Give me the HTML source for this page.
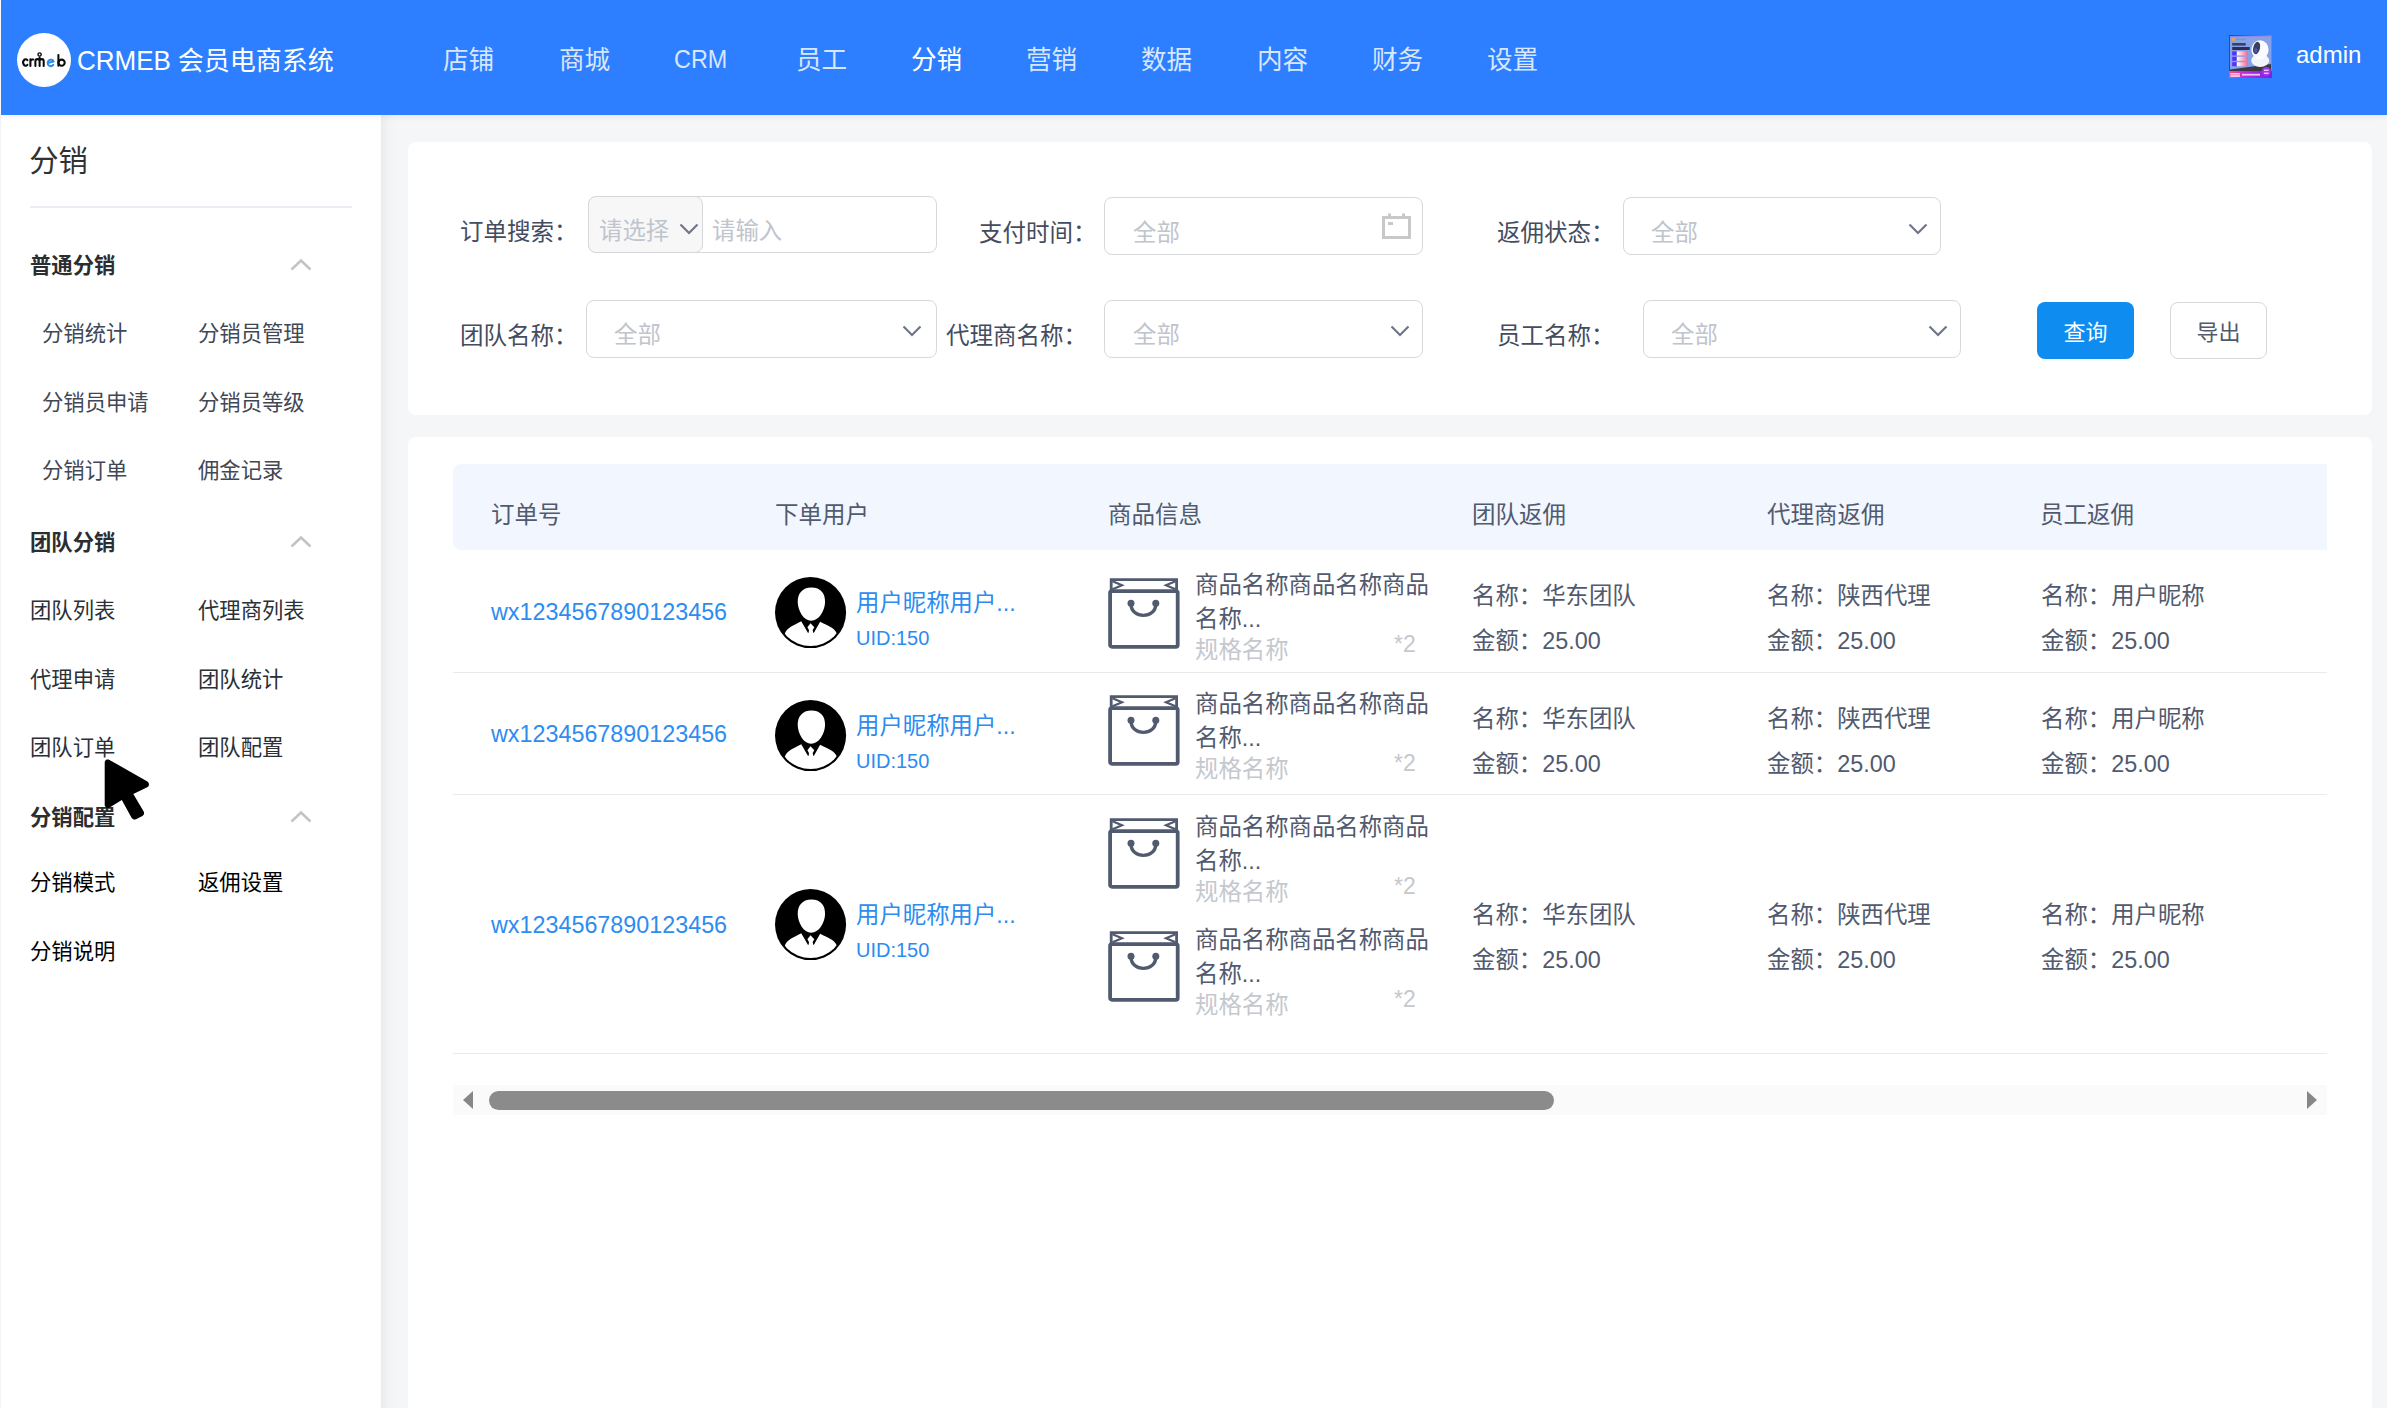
<!DOCTYPE html><html lang="zh-CN"><head><meta charset="utf-8"><title>CRMEB</title><style>
*{box-sizing:border-box;margin:0;padding:0}
html,body{width:2387px;height:1408px;overflow:hidden;background:#f5f6f8;font-family:"Liberation Sans","Noto Sans CJK SC",sans-serif}
.t{position:absolute;white-space:nowrap}
.b{position:absolute}
svg{position:absolute;overflow:visible}
</style></head><body>
<div class="b" style="left:0px;top:0px;width:381px;height:1408px;background:#fff"></div>
<div class="b" style="left:381px;top:0px;width:17px;height:1408px;background:linear-gradient(90deg,rgba(0,0,0,0.042),rgba(0,0,0,0.012) 45%,rgba(0,0,0,0))"></div>
<div class="b" style="left:0px;top:115px;width:1px;height:1293px;background:#f4f4f6"></div>
<div class="b" style="left:1px;top:0px;width:2386px;height:115px;background:#2d7fff;box-shadow:0 2px 6px rgba(0,0,0,0.06)"></div>
<div class="b" style="left:17px;top:33px;width:54px;height:54px;background:#fff;border-radius:50%"></div>
<svg style="left:17px;top:33px" width="54" height="54" viewBox="17 33 54 54" fill="none" stroke="#0a0a0a" stroke-width="2.05" stroke-linecap="round" stroke-linejoin="round"><path d="M27.4 60.2 A2.5 3.2 0 1 0 27.4 64.8"/><path d="M30.4 59.3 L30.4 66 M30.4 61.6 Q30.7 59.2 33.2 59.5"/><path d="M35.4 66 L35.4 61.3 Q35.4 59.1 37.5 59.1 Q39.6 59.1 39.6 61.3 L39.6 66 M39.6 61.3 Q39.6 59.1 41.7 59.1 Q43.7 59.1 43.7 61.3 L43.7 66 M39.6 60 L39.6 57.4"/><circle cx="39.6" cy="54.5" r="1.6" stroke-width="1.4"/><path d="M47.8 62.9 L53.6 61.6 A3.1 3.2 0 1 0 53.2 64.9" stroke="#2d8cf0"/><path d="M58.4 54.9 L58.4 65.8"/><circle cx="61.6" cy="62.7" r="3.1"/></svg>
<div class="t" style="left:77px;top:41.0px;font-size:26px;line-height:38px;color:#fff;transform:scaleY(1.08);transform-origin:50% 56%;">CRMEB</div>
<div class="t" style="left:177.8px;top:42.2px;font-size:26px;line-height:38px;color:#fff;">会员电商系统</div>
<div class="t" style="left:443px;top:40.5px;font-size:25.6px;line-height:38px;color:rgba(255,255,255,0.82);">店铺</div>
<div class="t" style="left:559px;top:40.5px;font-size:25.6px;line-height:38px;color:rgba(255,255,255,0.82);">商城</div>
<div class="t" style="left:674px;top:40.5px;font-size:23.4px;line-height:38px;color:rgba(255,255,255,0.82);transform:scaleY(1.07);transform-origin:50% 56%;">CRM</div>
<div class="t" style="left:796px;top:40.5px;font-size:25.6px;line-height:38px;color:rgba(255,255,255,0.82);">员工</div>
<div class="t" style="left:911px;top:40.5px;font-size:25.6px;line-height:38px;color:#fff;">分销</div>
<div class="t" style="left:1026px;top:40.5px;font-size:25.6px;line-height:38px;color:rgba(255,255,255,0.82);">营销</div>
<div class="t" style="left:1141px;top:40.5px;font-size:25.6px;line-height:38px;color:rgba(255,255,255,0.82);">数据</div>
<div class="t" style="left:1257px;top:40.5px;font-size:25.6px;line-height:38px;color:rgba(255,255,255,0.82);">内容</div>
<div class="t" style="left:1372px;top:40.5px;font-size:25.6px;line-height:38px;color:rgba(255,255,255,0.82);">财务</div>
<div class="t" style="left:1487px;top:40.5px;font-size:25.6px;line-height:38px;color:rgba(255,255,255,0.82);">设置</div>
<svg style="left:2229px;top:35px" width="43" height="43" viewBox="0 0 43 43"><defs><linearGradient id="ag1" x1="0" y1="0" x2="1" y2="0"><stop offset="0" stop-color="#4a22ff"/><stop offset="0.5" stop-color="#b42cf0"/><stop offset="1" stop-color="#ff4f86"/></linearGradient><linearGradient id="ag2" x1="0" y1="0" x2="1" y2="0"><stop offset="0" stop-color="#ff4f86"/><stop offset="0.35" stop-color="#c22ad8"/><stop offset="1" stop-color="#7a1fe0"/></linearGradient><linearGradient id="ag3" x1="0" y1="0" x2="1" y2="0"><stop offset="0" stop-color="#fff"/><stop offset="1" stop-color="#ff5f8f"/></linearGradient></defs><rect width="43" height="43" fill="url(#ag1)"/><rect x="1" y="1.2" width="41" height="35" fill="#86a2e6"/><rect x="3.2" y="3" width="2.6" height="3" fill="#e8a84a"/><rect x="7" y="3.8" width="10.5" height="1.2" fill="#7f93cf"/><rect x="3.2" y="8" width="13.5" height="2.6" fill="#3b3f66"/><rect x="3.2" y="12" width="17.5" height="3" fill="#2b2f52"/><rect x="3.2" y="16.4" width="4.3" height="4" fill="#5a2cff"/><rect x="8" y="16.4" width="11" height="4" fill="url(#ag3)"/><rect x="3.2" y="21.8" width="4.3" height="4" fill="#5a2cff"/><rect x="8" y="21.8" width="11" height="4" fill="url(#ag3)"/><rect x="3.2" y="27.2" width="4.3" height="4" fill="#5a2cff"/><rect x="8" y="27.2" width="11" height="4" fill="url(#ag3)"/><path d="M1 34.5 L42 29 L42 37 L1 37 Z" fill="#3a3a46"/><ellipse cx="31.2" cy="25.5" rx="9" ry="6.5" fill="#f3f5fb"/><ellipse cx="31" cy="14.8" rx="8.6" ry="9.6" fill="#fbfcff"/><ellipse cx="27.6" cy="13" rx="3.4" ry="6.3" transform="rotate(14 27.6 13)" fill="#3a3f5c"/><ellipse cx="26.8" cy="15.5" rx="1.6" ry="2.6" fill="#4a55b8"/><rect x="0" y="36" width="43" height="7" fill="url(#ag2)"/><circle cx="37.3" cy="36.6" r="4.6" fill="#a233e6"/><rect x="1.5" y="38" width="9.5" height="1.6" fill="#ffc6dc"/><rect x="1.5" y="40.2" width="9.5" height="1.6" fill="#ffd9e8"/><rect x="13" y="38.8" width="18" height="1.8" fill="#ecc4f6"/><rect x="35" y="34.6" width="4.6" height="1.4" fill="#f0c8fa"/><rect x="35" y="37.6" width="4.6" height="1.4" fill="#f0c8fa"/></svg>
<div class="t" style="left:2296px;top:38.0px;font-size:24px;line-height:34px;color:#fff;">admin</div>
<div class="t" style="left:29.2px;top:141.2px;font-size:29.33px;line-height:40px;color:#303133;">分销</div>
<div class="b" style="left:30px;top:206px;width:322px;height:2px;background:#ebedf5"></div>
<div class="t" style="left:30px;top:251.0px;font-size:21.33px;line-height:30px;color:#2c2d30;font-weight:bold">普通分销</div>
<svg style="left:290px;top:258px" width="22" height="14" viewBox="0 0 22 14"><path d="M1.5 11.5 L11 2.5 L20.5 11.5" fill="none" stroke="#c2c3c5" stroke-width="2.5"/></svg>
<div class="t" style="left:30px;top:528.0px;font-size:21.33px;line-height:30px;color:#2c2d30;font-weight:bold">团队分销</div>
<svg style="left:290px;top:535px" width="22" height="14" viewBox="0 0 22 14"><path d="M1.5 11.5 L11 2.5 L20.5 11.5" fill="none" stroke="#c2c3c5" stroke-width="2.5"/></svg>
<div class="t" style="left:30px;top:803.0px;font-size:21.33px;line-height:30px;color:#2c2d30;font-weight:bold">分销配置</div>
<svg style="left:290px;top:810px" width="22" height="14" viewBox="0 0 22 14"><path d="M1.5 11.5 L11 2.5 L20.5 11.5" fill="none" stroke="#c2c3c5" stroke-width="2.5"/></svg>
<div class="t" style="left:42px;top:319.0px;font-size:21.33px;line-height:30px;color:#414754;">分销统计</div>
<div class="t" style="left:198px;top:319.0px;font-size:21.33px;line-height:30px;color:#414754;">分销员管理</div>
<div class="t" style="left:42px;top:388.0px;font-size:21.33px;line-height:30px;color:#414754;">分销员申请</div>
<div class="t" style="left:198px;top:388.0px;font-size:21.33px;line-height:30px;color:#414754;">分销员等级</div>
<div class="t" style="left:42px;top:456.0px;font-size:21.33px;line-height:30px;color:#414754;">分销订单</div>
<div class="t" style="left:198px;top:456.0px;font-size:21.33px;line-height:30px;color:#414754;">佣金记录</div>
<div class="t" style="left:30px;top:596.0px;font-size:21.33px;line-height:30px;color:#2b2f36;">团队列表</div>
<div class="t" style="left:198px;top:596.0px;font-size:21.33px;line-height:30px;color:#2b2f36;">代理商列表</div>
<div class="t" style="left:30px;top:665.0px;font-size:21.33px;line-height:30px;color:#2b2f36;">代理申请</div>
<div class="t" style="left:198px;top:665.0px;font-size:21.33px;line-height:30px;color:#2b2f36;">团队统计</div>
<div class="t" style="left:30px;top:733.0px;font-size:21.33px;line-height:30px;color:#2b2f36;">团队订单</div>
<div class="t" style="left:198px;top:733.0px;font-size:21.33px;line-height:30px;color:#2b2f36;">团队配置</div>
<div class="t" style="left:30px;top:868.0px;font-size:21.33px;line-height:30px;color:#000;">分销模式</div>
<div class="t" style="left:198px;top:868.0px;font-size:21.33px;line-height:30px;color:#000;">返佣设置</div>
<div class="t" style="left:30px;top:937.0px;font-size:21.33px;line-height:30px;color:#000;">分销说明</div>
<svg style="left:100px;top:754px" width="56" height="72" viewBox="0 0 56 72"><path d="M9.5 5.9 L8.6 5.5 L7.7 5.4 L6.7 5.6 L5.9 6.1 L5.3 6.8 L4.8 7.7 L4.7 8.6 L4.7 50.8 L4.8 51.7 L5.3 52.6 L5.9 53.3 L6.8 53.8 L7.7 53.9 L8.7 53.9 L9.6 53.5 L21.8 45.9 L31.7 63.9 L32.3 64.6 L33.1 65.2 L34.1 65.5 L35.0 65.5 L36.0 65.2 L42.4 61.9 L43.2 61.2 L43.8 60.4 L44.1 59.4 L44.0 58.3 L43.7 57.4 L33.3 40.0 L47.2 33.2 L48.0 32.7 L48.6 31.9 L48.9 31.0 L48.9 30.0 L48.7 29.0 L48.1 28.2 L47.4 27.6 L9.5 5.9Z" fill="#000"/></svg>
<div class="b" style="left:408px;top:142px;width:1964px;height:273px;background:#fff;border-radius:8px"></div>
<div class="t" style="left:460px;top:214.5px;font-size:23.5px;line-height:34px;color:#444c5e;">订单搜索：</div>
<div class="b" style="left:588px;top:196px;width:349px;height:57px;border:1px solid #d7d8dc;border-radius:8px;background:#fff;"></div>
<div class="b" style="left:588px;top:196px;width:115px;height:57px;border:1px solid #d7d8dc;border-radius:8px;background:#f7f7f8"></div>
<div class="t" style="left:599px;top:213.5px;font-size:23.4px;line-height:34px;color:#c0c4cc;">请选择</div>
<svg style="left:679px;top:222.5px" width="20" height="12" viewBox="0 0 20 12"><path d="M1.5 1.5 L10 10 L18.5 1.5" fill="none" stroke="#6e7687" stroke-width="2.2"/></svg>
<div class="t" style="left:712px;top:213.5px;font-size:23.4px;line-height:34px;color:#c0c4cc;">请输入</div>
<div class="t" style="left:979px;top:215.6px;font-size:23.5px;line-height:34px;color:#444c5e;">支付时间：</div>
<div class="b" style="left:1104px;top:197px;width:319px;height:58px;border:1px solid #d7d8dc;border-radius:8px;background:#fff;"></div>
<div class="t" style="left:1133px;top:215.5px;font-size:23.4px;line-height:34px;color:#c0c4cc;">全部</div>
<svg style="left:1382px;top:213px" width="29" height="27" viewBox="0 0 29 27"><rect x="1.5" y="4.5" width="26" height="20" fill="none" stroke="#c8c8c8" stroke-width="3"/><rect x="6" y="0.5" width="3" height="5" fill="#c8c8c8"/><rect x="20" y="0.5" width="3" height="5" fill="#c8c8c8"/><rect x="6" y="9" width="5" height="3" fill="#c8c8c8"/></svg>
<div class="t" style="left:1497px;top:215.6px;font-size:23.5px;line-height:34px;color:#444c5e;">返佣状态：</div>
<div class="b" style="left:1623px;top:197px;width:318px;height:58px;border:1px solid #d7d8dc;border-radius:8px;background:#fff;"></div>
<div class="t" style="left:1651px;top:215.5px;font-size:23.4px;line-height:34px;color:#c0c4cc;">全部</div>
<svg style="left:1908px;top:222.5px" width="20" height="12" viewBox="0 0 20 12"><path d="M1.5 1.5 L10 10 L18.5 1.5" fill="none" stroke="#6e7687" stroke-width="2.2"/></svg>
<div class="t" style="left:460px;top:318.5px;font-size:23.5px;line-height:34px;color:#444c5e;">团队名称：</div>
<div class="b" style="left:586px;top:300px;width:351px;height:58px;border:1px solid #d7d8dc;border-radius:8px;background:#fff;"></div>
<div class="t" style="left:614px;top:317.5px;font-size:23.4px;line-height:34px;color:#c0c4cc;">全部</div>
<svg style="left:902px;top:324.5px" width="20" height="12" viewBox="0 0 20 12"><path d="M1.5 1.5 L10 10 L18.5 1.5" fill="none" stroke="#6e7687" stroke-width="2.2"/></svg>
<div class="t" style="left:946px;top:318.5px;font-size:23.5px;line-height:34px;color:#444c5e;">代理商名称：</div>
<div class="b" style="left:1104px;top:300px;width:319px;height:58px;border:1px solid #d7d8dc;border-radius:8px;background:#fff;"></div>
<div class="t" style="left:1133px;top:317.5px;font-size:23.4px;line-height:34px;color:#c0c4cc;">全部</div>
<svg style="left:1390px;top:324.5px" width="20" height="12" viewBox="0 0 20 12"><path d="M1.5 1.5 L10 10 L18.5 1.5" fill="none" stroke="#6e7687" stroke-width="2.2"/></svg>
<div class="t" style="left:1497px;top:318.5px;font-size:23.5px;line-height:34px;color:#444c5e;">员工名称：</div>
<div class="b" style="left:1643px;top:300px;width:318px;height:58px;border:1px solid #d7d8dc;border-radius:8px;background:#fff;"></div>
<div class="t" style="left:1671px;top:317.5px;font-size:23.4px;line-height:34px;color:#c0c4cc;">全部</div>
<svg style="left:1928px;top:324.5px" width="20" height="12" viewBox="0 0 20 12"><path d="M1.5 1.5 L10 10 L18.5 1.5" fill="none" stroke="#6e7687" stroke-width="2.2"/></svg>
<div class="b" style="left:2037px;top:302px;width:97px;height:57px;background:#0e8cf0;border-radius:8px"></div>
<div class="t" style="left:2037px;top:316.8px;font-size:22px;line-height:32px;color:#fff;width:97px;text-align:center;">查询</div>
<div class="b" style="left:2170px;top:302px;width:97px;height:57px;background:#fff;border:1px solid #d7d8dc;border-radius:8px"></div>
<div class="t" style="left:2170px;top:316.8px;font-size:22px;line-height:32px;color:#515a6e;width:97px;text-align:center;">导出</div>
<div class="b" style="left:408px;top:437px;width:1964px;height:971px;background:#fff;border-radius:8px 8px 0 0"></div>
<div class="b" style="left:453px;top:464px;width:1874px;height:86px;background:#f2f6fe;border-radius:8px 0 0 8px"></div>
<div class="t" style="left:491px;top:498.0px;font-size:23.5px;line-height:34px;color:#515a6e;">订单号</div>
<div class="t" style="left:775px;top:498.0px;font-size:23.5px;line-height:34px;color:#515a6e;">下单用户</div>
<div class="t" style="left:1108px;top:498.0px;font-size:23.5px;line-height:34px;color:#515a6e;">商品信息</div>
<div class="t" style="left:1472px;top:498.0px;font-size:23.5px;line-height:34px;color:#515a6e;">团队返佣</div>
<div class="t" style="left:1767px;top:498.0px;font-size:23.5px;line-height:34px;color:#515a6e;">代理商返佣</div>
<div class="t" style="left:2040px;top:498.0px;font-size:23.5px;line-height:34px;color:#515a6e;">员工返佣</div>
<div class="t" style="left:491px;top:595.0px;font-size:23.33px;line-height:34px;color:#2d8cf0;">wx1234567890123456</div>
<svg style="left:775.3px;top:577.25px" width="71.1" height="71.1" viewBox="0 0 72 72"><defs><clipPath id="c7753577"><circle cx="36" cy="36" r="33.9"/></clipPath></defs><circle cx="36" cy="36" r="36" fill="#000"/><g clip-path="url(#c7753577)"><path d="M36.9 10.6 C46.5 10.6 51 17 50.7 25.5 C50.4 34 44.5 44.3 36.6 44.3 C29 44.3 23.3 34 23 25.5 C22.8 17 27.5 10.6 36.9 10.6 Z" fill="#fff"/><path d="M2 72 L9.7 57.8 C12.4 50.8 18.3 49.6 26.6 44.9 L33.3 56.4 L34.1 56.4 L34.4 53.7 L32.8 50.8 L36 46.9 L39.8 50.8 L38.2 53.7 L38.7 56.4 L39.4 56.4 L45.7 45.2 C53.7 49.3 60.2 51.3 62.6 57.2 L70 72 Z" fill="#fff"/></g></svg>
<div class="t" style="left:856px;top:585.5999999999999px;font-size:23.4px;line-height:34px;color:#2d8cf0;">用户昵称用户...</div>
<div class="t" style="left:856px;top:623.0px;font-size:20px;line-height:30px;color:#2d8cf0;">UID:150</div>
<svg style="left:1108.2px;top:577.8px" width="72" height="71" viewBox="0 0 72 71"><rect x="2.1" y="13.2" width="67.6" height="55.6" rx="1.8" fill="none" stroke="#515a6e" stroke-width="3.8"/><path d="M3.2 12 L3.2 1.6 L68.6 1.6 L68.6 12" fill="none" stroke="#515a6e" stroke-width="2.8"/><path d="M4.5 3.3 L14 7.3 L4.5 11.3 M67.5 3.3 L58 7.3 L67.5 11.3" fill="none" stroke="#515a6e" stroke-width="2.2"/><path d="M23 26 C23 41.2 47.8 41.2 47.8 26" fill="none" stroke="#515a6e" stroke-width="3.4"/><circle cx="23" cy="25.3" r="3.5" fill="#515a6e"/><circle cx="47.8" cy="25.3" r="3.5" fill="#515a6e"/></svg>
<div class="t" style="left:1195px;top:567.9px;font-size:23.4px;line-height:34px;color:#515a6e;">商品名称商品名称商品</div>
<div class="t" style="left:1195px;top:601.6px;font-size:23.4px;line-height:34px;color:#515a6e;">名称...</div>
<div class="t" style="left:1195px;top:633.5px;font-size:23.4px;line-height:32px;color:#c5c8ce;">规格名称</div>
<div class="t" style="left:1394px;top:627.5px;font-size:23px;line-height:32px;color:#c5c8ce;">*2</div>
<div class="t" style="left:1472px;top:579.0px;font-size:23.4px;line-height:34px;color:#515a6e;">名称：华东团队</div>
<div class="t" style="left:1472px;top:624.3px;font-size:23.4px;line-height:34px;color:#515a6e;">金额：25.00</div>
<div class="t" style="left:1767px;top:579.0px;font-size:23.4px;line-height:34px;color:#515a6e;">名称：陕西代理</div>
<div class="t" style="left:1767px;top:624.3px;font-size:23.4px;line-height:34px;color:#515a6e;">金额：25.00</div>
<div class="t" style="left:2041px;top:579.0px;font-size:23.4px;line-height:34px;color:#515a6e;">名称：用户昵称</div>
<div class="t" style="left:2041px;top:624.3px;font-size:23.4px;line-height:34px;color:#515a6e;">金额：25.00</div>
<div class="b" style="left:453px;top:672px;width:1874px;height:1px;background:#e8eaec"></div>
<div class="t" style="left:491px;top:716.5px;font-size:23.33px;line-height:34px;color:#2d8cf0;">wx1234567890123456</div>
<svg style="left:775.3px;top:700.25px" width="71.1" height="71.1" viewBox="0 0 72 72"><defs><clipPath id="c7753700"><circle cx="36" cy="36" r="33.9"/></clipPath></defs><circle cx="36" cy="36" r="36" fill="#000"/><g clip-path="url(#c7753700)"><path d="M36.9 10.6 C46.5 10.6 51 17 50.7 25.5 C50.4 34 44.5 44.3 36.6 44.3 C29 44.3 23.3 34 23 25.5 C22.8 17 27.5 10.6 36.9 10.6 Z" fill="#fff"/><path d="M2 72 L9.7 57.8 C12.4 50.8 18.3 49.6 26.6 44.9 L33.3 56.4 L34.1 56.4 L34.4 53.7 L32.8 50.8 L36 46.9 L39.8 50.8 L38.2 53.7 L38.7 56.4 L39.4 56.4 L45.7 45.2 C53.7 49.3 60.2 51.3 62.6 57.2 L70 72 Z" fill="#fff"/></g></svg>
<div class="t" style="left:856px;top:708.5999999999999px;font-size:23.4px;line-height:34px;color:#2d8cf0;">用户昵称用户...</div>
<div class="t" style="left:856px;top:746.0px;font-size:20px;line-height:30px;color:#2d8cf0;">UID:150</div>
<svg style="left:1108.2px;top:695.1px" width="72" height="71" viewBox="0 0 72 71"><rect x="2.1" y="13.2" width="67.6" height="55.6" rx="1.8" fill="none" stroke="#515a6e" stroke-width="3.8"/><path d="M3.2 12 L3.2 1.6 L68.6 1.6 L68.6 12" fill="none" stroke="#515a6e" stroke-width="2.8"/><path d="M4.5 3.3 L14 7.3 L4.5 11.3 M67.5 3.3 L58 7.3 L67.5 11.3" fill="none" stroke="#515a6e" stroke-width="2.2"/><path d="M23 26 C23 41.2 47.8 41.2 47.8 26" fill="none" stroke="#515a6e" stroke-width="3.4"/><circle cx="23" cy="25.3" r="3.5" fill="#515a6e"/><circle cx="47.8" cy="25.3" r="3.5" fill="#515a6e"/></svg>
<div class="t" style="left:1195px;top:687.1px;font-size:23.4px;line-height:34px;color:#515a6e;">商品名称商品名称商品</div>
<div class="t" style="left:1195px;top:720.8000000000001px;font-size:23.4px;line-height:34px;color:#515a6e;">名称...</div>
<div class="t" style="left:1195px;top:752.7px;font-size:23.4px;line-height:32px;color:#c5c8ce;">规格名称</div>
<div class="t" style="left:1394px;top:746.7px;font-size:23px;line-height:32px;color:#c5c8ce;">*2</div>
<div class="t" style="left:1472px;top:701.8px;font-size:23.4px;line-height:34px;color:#515a6e;">名称：华东团队</div>
<div class="t" style="left:1472px;top:747.0999999999999px;font-size:23.4px;line-height:34px;color:#515a6e;">金额：25.00</div>
<div class="t" style="left:1767px;top:701.8px;font-size:23.4px;line-height:34px;color:#515a6e;">名称：陕西代理</div>
<div class="t" style="left:1767px;top:747.0999999999999px;font-size:23.4px;line-height:34px;color:#515a6e;">金额：25.00</div>
<div class="t" style="left:2041px;top:701.8px;font-size:23.4px;line-height:34px;color:#515a6e;">名称：用户昵称</div>
<div class="t" style="left:2041px;top:747.0999999999999px;font-size:23.4px;line-height:34px;color:#515a6e;">金额：25.00</div>
<div class="b" style="left:453px;top:794px;width:1874px;height:1px;background:#e8eaec"></div>
<div class="t" style="left:491px;top:908.0px;font-size:23.33px;line-height:34px;color:#2d8cf0;">wx1234567890123456</div>
<svg style="left:775.3px;top:889.25px" width="71.1" height="71.1" viewBox="0 0 72 72"><defs><clipPath id="c7753889"><circle cx="36" cy="36" r="33.9"/></clipPath></defs><circle cx="36" cy="36" r="36" fill="#000"/><g clip-path="url(#c7753889)"><path d="M36.9 10.6 C46.5 10.6 51 17 50.7 25.5 C50.4 34 44.5 44.3 36.6 44.3 C29 44.3 23.3 34 23 25.5 C22.8 17 27.5 10.6 36.9 10.6 Z" fill="#fff"/><path d="M2 72 L9.7 57.8 C12.4 50.8 18.3 49.6 26.6 44.9 L33.3 56.4 L34.1 56.4 L34.4 53.7 L32.8 50.8 L36 46.9 L39.8 50.8 L38.2 53.7 L38.7 56.4 L39.4 56.4 L45.7 45.2 C53.7 49.3 60.2 51.3 62.6 57.2 L70 72 Z" fill="#fff"/></g></svg>
<div class="t" style="left:856px;top:897.5999999999999px;font-size:23.4px;line-height:34px;color:#2d8cf0;">用户昵称用户...</div>
<div class="t" style="left:856px;top:935.0px;font-size:20px;line-height:30px;color:#2d8cf0;">UID:150</div>
<svg style="left:1108.2px;top:818.1px" width="72" height="71" viewBox="0 0 72 71"><rect x="2.1" y="13.2" width="67.6" height="55.6" rx="1.8" fill="none" stroke="#515a6e" stroke-width="3.8"/><path d="M3.2 12 L3.2 1.6 L68.6 1.6 L68.6 12" fill="none" stroke="#515a6e" stroke-width="2.8"/><path d="M4.5 3.3 L14 7.3 L4.5 11.3 M67.5 3.3 L58 7.3 L67.5 11.3" fill="none" stroke="#515a6e" stroke-width="2.2"/><path d="M23 26 C23 41.2 47.8 41.2 47.8 26" fill="none" stroke="#515a6e" stroke-width="3.4"/><circle cx="23" cy="25.3" r="3.5" fill="#515a6e"/><circle cx="47.8" cy="25.3" r="3.5" fill="#515a6e"/></svg>
<div class="t" style="left:1195px;top:810.1px;font-size:23.4px;line-height:34px;color:#515a6e;">商品名称商品名称商品</div>
<div class="t" style="left:1195px;top:843.8000000000001px;font-size:23.4px;line-height:34px;color:#515a6e;">名称...</div>
<div class="t" style="left:1195px;top:875.7px;font-size:23.4px;line-height:32px;color:#c5c8ce;">规格名称</div>
<div class="t" style="left:1394px;top:869.7px;font-size:23px;line-height:32px;color:#c5c8ce;">*2</div>
<svg style="left:1108.2px;top:931.2px" width="72" height="71" viewBox="0 0 72 71"><rect x="2.1" y="13.2" width="67.6" height="55.6" rx="1.8" fill="none" stroke="#515a6e" stroke-width="3.8"/><path d="M3.2 12 L3.2 1.6 L68.6 1.6 L68.6 12" fill="none" stroke="#515a6e" stroke-width="2.8"/><path d="M4.5 3.3 L14 7.3 L4.5 11.3 M67.5 3.3 L58 7.3 L67.5 11.3" fill="none" stroke="#515a6e" stroke-width="2.2"/><path d="M23 26 C23 41.2 47.8 41.2 47.8 26" fill="none" stroke="#515a6e" stroke-width="3.4"/><circle cx="23" cy="25.3" r="3.5" fill="#515a6e"/><circle cx="47.8" cy="25.3" r="3.5" fill="#515a6e"/></svg>
<div class="t" style="left:1195px;top:923.1px;font-size:23.4px;line-height:34px;color:#515a6e;">商品名称商品名称商品</div>
<div class="t" style="left:1195px;top:956.8000000000001px;font-size:23.4px;line-height:34px;color:#515a6e;">名称...</div>
<div class="t" style="left:1195px;top:988.7px;font-size:23.4px;line-height:32px;color:#c5c8ce;">规格名称</div>
<div class="t" style="left:1394px;top:982.7px;font-size:23px;line-height:32px;color:#c5c8ce;">*2</div>
<div class="t" style="left:1472px;top:897.8px;font-size:23.4px;line-height:34px;color:#515a6e;">名称：华东团队</div>
<div class="t" style="left:1472px;top:943.0999999999999px;font-size:23.4px;line-height:34px;color:#515a6e;">金额：25.00</div>
<div class="t" style="left:1767px;top:897.8px;font-size:23.4px;line-height:34px;color:#515a6e;">名称：陕西代理</div>
<div class="t" style="left:1767px;top:943.0999999999999px;font-size:23.4px;line-height:34px;color:#515a6e;">金额：25.00</div>
<div class="t" style="left:2041px;top:897.8px;font-size:23.4px;line-height:34px;color:#515a6e;">名称：用户昵称</div>
<div class="t" style="left:2041px;top:943.0999999999999px;font-size:23.4px;line-height:34px;color:#515a6e;">金额：25.00</div>
<div class="b" style="left:453px;top:1053px;width:1874px;height:1px;background:#e8eaec"></div>
<div class="b" style="left:453px;top:1085px;width:1874px;height:30px;background:#fafafa"></div>
<div class="b" style="left:489px;top:1090.5px;width:1065px;height:19px;background:#8b8b8b;border-radius:10px"></div>
<svg style="left:463px;top:1091px" width="11" height="18" viewBox="0 0 11 18"><path d="M10 0 L10 18 L0 9 Z" fill="#878787"/></svg>
<svg style="left:2306px;top:1091px" width="11" height="18" viewBox="0 0 11 18"><path d="M1 0 L1 18 L11 9 Z" fill="#878787"/></svg>
</body></html>
